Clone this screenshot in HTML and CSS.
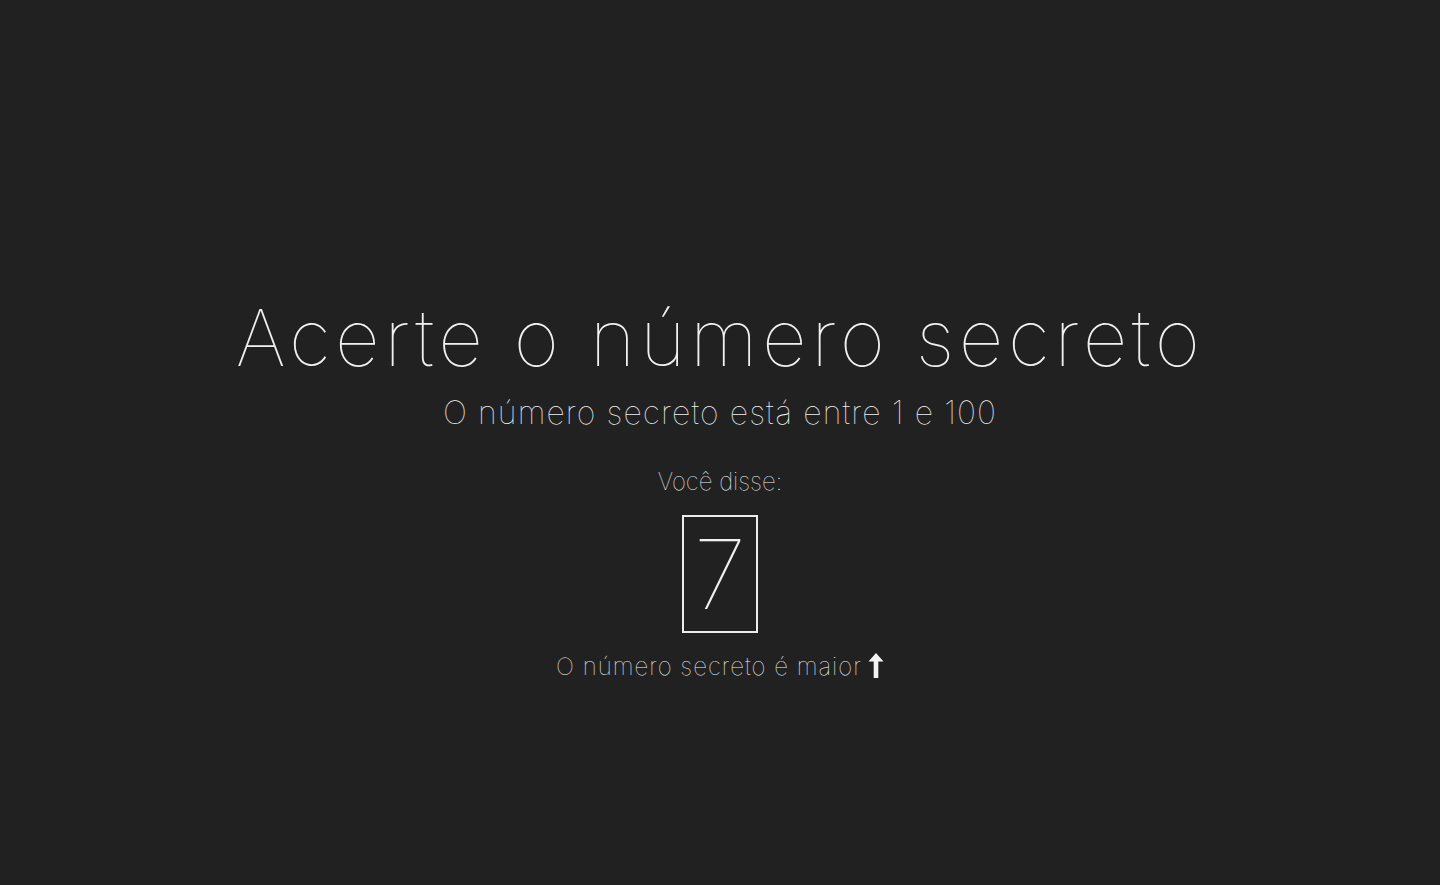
FILE: index.html
```html
<!DOCTYPE html>
<html lang="pt-BR">
<head>
<meta charset="utf-8">
<title>Jogo do número secreto</title>
<link rel="stylesheet" href="styles.css">
</head>
<body>
<main class="game">
  <h1 class="title">Acerte o número secreto</h1>
  <h3 class="subtitle">O número secreto está entre 1 e 100</h3>
  <div class="guess">
    <div class="guess-label">Você disse:</div>
    <div class="guess-box"><span class="guess-number">7</span></div>
    <div class="hint">O número secreto é maior
      <svg class="arrow" width="16" height="25" viewBox="0 0 16 25" aria-hidden="true">
        <path d="M8 0 L15.5 8.5 L10.3 8.5 L10.3 25 L5.7 25 L5.7 8.5 L0.5 8.5 Z" fill="#f4f4f4"/>
      </svg>
    </div>
  </div>
</main>
</body>
</html>
```
FILE: styles.css
```css
html, body {
  margin: 0;
  padding: 0;
  background: #212121;
}
body {
  min-height: 885px;
  color: #f0f0f0;
  font-family: Inter, "Liberation Sans", sans-serif;
  font-weight: 100;
}
.game {
  display: flex;
  flex-direction: column;
  align-items: center;
  padding-top: 291px;
}
.title {
  margin: 0;
  font-size: 78px;
  line-height: 1.2;
  font-weight: 100;
  letter-spacing: 4.5px;
  white-space: nowrap;
}
.subtitle {
  margin: 9px 0 0;
  font-size: 32px;
  line-height: 1.2;
  font-weight: 100;
  letter-spacing: 1.1px;
  white-space: nowrap;
}
.guess {
  display: flex;
  flex-direction: column;
  align-items: center;
  margin-top: 36px;
}
.guess-label {
  font-size: 24px;
  line-height: 1.2;
  letter-spacing: 0;
}
.guess-box {
  margin-top: 18px;
  width: 72px;
  height: 114px;
  border: 2px solid #ececec;
  display: flex;
  align-items: center;
  justify-content: center;
}
.guess-number {
  font-size: 96px;
  line-height: 1;
  font-weight: 100;
}
.hint {
  margin-top: 20px;
  font-size: 24px;
  line-height: 1.2;
  letter-spacing: 1px;
  display: flex;
  align-items: center;
  gap: 6px;
}
.arrow {
  display: block;
  margin-top: -4px;
}
```
